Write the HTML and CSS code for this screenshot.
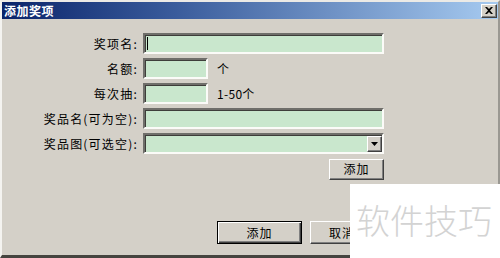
FILE: index.html
```html
<!DOCTYPE html>
<html lang="zh">
<head>
<meta charset="utf-8">
<title>添加奖项</title>
<link rel="stylesheet" href="styles.css">
</head>
<body>
<div class="window">
  <div class="titlebar">
    <span class="title">添加奖项</span>
    <span class="close"><svg width="8" height="7" viewBox="0 0 8 7"><path d="M0 0h2l2 2 2-2h2L5 3.5 8 7H6L4 5 2 7H0l3-3.5z" fill="#000"/></svg></span>
  </div>
  <div class="form">
    <label class="lbl">奖项名:</label>
    <div class="field"><span class="input wide caret"></span></div>
    <label class="lbl">名额:</label>
    <div class="field"><span class="input narrow"></span><span class="unit">个</span></div>
    <label class="lbl">每次抽:</label>
    <div class="field"><span class="input narrow"></span><span class="unit">1-50个</span></div>
    <label class="lbl">奖品名(可为空):</label>
    <div class="field"><span class="input wide"></span></div>
    <label class="lbl">奖品图(可选空):</label>
    <div class="field"><span class="input wide select"><span class="drop"><svg width="7" height="4" viewBox="0 0 7 4"><path d="M0 0h7L3.5 4z" fill="#000"/></svg></span></span></div>
    <div></div>
    <div class="field addrow"><button class="btn small">添加</button></div>
  </div>
  <div class="footer">
    <button class="btn big default">添加</button>
    <button class="btn big cancel">取消</button>
  </div>
  <div class="watermark">软件技巧</div>
</div>
</body>
</html>
```
FILE: styles.css
```css
* { box-sizing: border-box; }
html, body { margin: 0; padding: 0; }
body {
  width: 500px;
  height: 258px;
  overflow: hidden;
  font-family: "Noto Sans CJK SC", "Liberation Sans", sans-serif;
  font-size: 12px;
  color: #000;
  background: #d4d0c8;
}
.window {
  position: relative;
  width: 500px;
  height: 258px;
  background: #d4d0c8;
  border-top: 2px solid #eceae6;
  border-left: 2px solid #f4f3f0;
  border-right: 2px solid #9a9892;
  border-bottom: 3px solid #45443f;
}
.titlebar {
  height: 17px;
  background: linear-gradient(to right, #0a246a 0%, #3a5c9c 35%, #a6caf0 100%);
  display: flex;
  align-items: center;
  justify-content: space-between;
  padding: 0 1px 0 2px;
}
.title {
  color: #fff;
  font-weight: bold;
  font-size: 12px;
  line-height: 17px;
  letter-spacing: 0.5px;
}
.close {
  width: 16px;
  height: 14px;
  background: #d4d0c8;
  border-top: 1px solid #fff;
  border-left: 1px solid #fff;
  border-right: 1px solid #404040;
  border-bottom: 1px solid #404040;
  box-shadow: inset -1px -1px 0 #808080;
  display: flex;
  align-items: center;
  justify-content: center;
}
.form {
  display: grid;
  grid-template-columns: 136px 241px;
  grid-auto-rows: 21px;
  column-gap: 5px;
  row-gap: 4px;
  padding-top: 14px;
}
.lbl {
  text-align: right;
  line-height: 21px;
  white-space: nowrap;
  letter-spacing: 1.2px;
}
.field {
  display: flex;
  align-items: center;
}
.input {
  display: block;
  position: relative;
  height: 21px;
  background: #c9e7cd;
  border-top: 2px solid #6f6e6a;
  border-left: 2px solid #6f6e6a;
  border-right: 2px solid #fbfbf8;
  border-bottom: 2px solid #fbfbf8;
  box-shadow: inset 1px 1px 0 #3e3d3a;
}
.wide { width: 241px; }
.narrow { width: 65px; }
.caret::before {
  content: "";
  position: absolute;
  left: 2px;
  top: 2px;
  width: 1px;
  height: 13px;
  background: #000;
}
.unit {
  margin-left: 9px;
  line-height: 21px;
  letter-spacing: 0.3px;
}
.select { display: flex; justify-content: flex-end; align-items: stretch; padding: 1px 0 0 0; }
.drop {
  width: 15px;
  background: #d4d0c8;
  border-top: 1px solid #fff;
  border-left: 1px solid #fff;
  border-right: 1px solid #404040;
  border-bottom: 1px solid #404040;
  box-shadow: inset -1px -1px 0 #808080;
  display: flex;
  align-items: center;
  justify-content: center;
}
.addrow {
  justify-content: flex-end;
  margin-top: 1px;
}
.btn {
  font-family: "Noto Sans CJK SC", "Liberation Sans", sans-serif;
  font-size: 12px;
  color: #000;
  background: #d4d0c8;
  border-top: 1px solid #fff;
  border-left: 1px solid #fff;
  border-right: 1px solid #404040;
  border-bottom: 1px solid #404040;
  box-shadow: inset -1px -1px 0 #808080;
  padding: 0;
  margin: 0;
  line-height: 1;
  letter-spacing: 1px;
}
.small { width: 55px; height: 21px; }
.footer {
  display: flex;
  gap: 8px;
  padding-left: 215px;
  margin-top: 42px;
}
.big { width: 85px; height: 23px; }
.cancel { text-align: left; padding-left: 18px; }
.default {
  border: 1px solid #000;
  box-shadow: inset 1px 1px 0 #fff, inset -1px -1px 0 #404040, inset -2px -2px 0 #808080;
}
.watermark {
  position: absolute;
  left: 348px;
  top: 182px;
  width: 152px;
  height: 76px;
  background: #fff;
  color: #d3d3d3;
  font-size: 34px;
  font-weight: 300;
  line-height: 1;
  padding: 19px 0 0 6px;
  white-space: nowrap;
}
```
